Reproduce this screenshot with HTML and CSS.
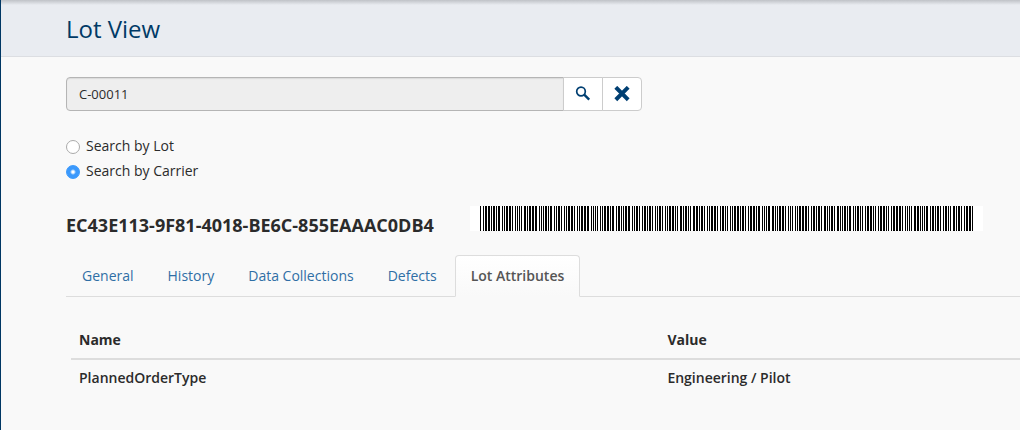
FILE: index.html
```html
<!DOCTYPE html>
<html lang="en">
<head>
<meta charset="utf-8">
<title>Lot View</title>
<link rel="stylesheet" href="styles.css">
</head>
<body>
<header class="page-header"><h1 class="page-title">Lot View</h1></header>
<main class="content">
  <form class="search">
    <div class="search-bar">
      <input class="search-input" type="text" value="C-00011" aria-label="Search value" readonly>
      <button class="search-button" type="button" aria-label="Search">
        <svg width="16" height="16" viewBox="0 0 16 16" aria-hidden="true"><circle cx="6" cy="5.5" r="4.3" fill="none" stroke="currentColor" stroke-width="1.7"/><path d="M9.2 8.7 14.2 13.7" stroke="currentColor" stroke-width="2.4" fill="none"/></svg>
      </button>
      <button class="search-button" type="button" aria-label="Clear">
        <svg width="16" height="16" viewBox="0 0 16 16" aria-hidden="true"><path d="M3.2 2.7 12.8 12.3M12.8 2.7 3.2 12.3" stroke="currentColor" stroke-width="4" stroke-linecap="square" stroke-linejoin="round" fill="none"/></svg>
      </button>
    </div>
    <div class="options">
      <label class="option"><input class="radio" type="radio" name="mode">Search by Lot</label>
      <label class="option"><input class="radio" type="radio" name="mode" checked>Search by Carrier</label>
    </div>
  </form>
  <div class="lot">
    <h2 class="lot-id">EC43E113-9F81-4018-BE6C-855EAAAC0DB4</h2>
    <div class="barcode" data-value="EC43E113-9F81-4018-BE6C-855EAAAC0DB4" role="img" aria-label="Lot barcode"></div>
  </div>
  <nav class="tabs">
    <a class="tab" href="#general">General</a>
    <a class="tab" href="#history">History</a>
    <a class="tab" href="#data">Data Collections</a>
    <a class="tab" href="#defects">Defects</a>
    <a class="tab tab-active" href="#attributes" aria-current="page">Lot Attributes</a>
  </nav>
  <div class="panel">
    <table class="attributes">
      <thead><tr><th class="name-column" scope="col">Name</th><th scope="col">Value</th></tr></thead>
      <tbody><tr><td>PlannedOrderType</td><td>Engineering / Pilot</td></tr></tbody>
    </table>
  </div>
</main>
<script src="barcode.js"></script>
</body>
</html>
```
FILE: styles.css
```css
* { box-sizing: border-box; }
body {
  margin: 0;
  min-height: 100vh;
  border-left: 1px solid #003764;
  background: #f9f9f9;
  color: #2b2b2b;
  font: 14px/20px "Open Sans", "Noto Sans", sans-serif;
}
.page-header {
  padding: 14px 65px 12px;
  border-bottom: 1px solid #dcdee2;
  background: linear-gradient(#bfc2c7, #e9ecf1 5px);
}
.page-title {
  margin: 0;
  color: #003a66;
  font-size: 24px;
  font-weight: 400;
  line-height: 30px;
}
.content { padding: 20px 0 20px 65px; }
.search-bar {
  display: flex;
  max-width: 576px;
  height: 34px;
}
.search-input {
  flex: 1;
  min-width: 0;
  padding: 0 12px;
  border: 1px solid #b5b5b5;
  border-radius: 4px 0 0 4px;
  background: #eee;
  box-shadow: inset 0 1px 1px rgba(0, 0, 0, .08);
  color: #2b2b2b;
  font: inherit;
  font-size: 13px;
}
.search-button {
  display: flex;
  align-items: center;
  justify-content: center;
  width: 40px;
  margin-left: -1px;
  padding: 0;
  border: 1px solid #ccc;
  background: #fff;
  color: #003f72;
}
.search-button:last-child { border-radius: 0 4px 4px 0; }
.options {
  display: grid;
  gap: 5px;
  margin-top: 25px;
}
.option {
  display: flex;
  align-items: center;
  gap: 6px;
  width: fit-content;
}
.radio {
  appearance: none;
  width: 14px;
  height: 14px;
  margin: 2px 0 0;
  border: 1px solid #aaa;
  border-radius: 50%;
  background: #fff;
}
.radio:checked {
  border-color: #3b99fc;
  background: radial-gradient(circle, #fff 1px, #3b99fc 3px);
}
.lot {
  display: flex;
  align-items: flex-start;
  gap: 36px;
  margin-top: 25px;
}
.lot-id {
  margin: 7px 0 0;
  font-size: 18px;
  font-weight: 700;
  line-height: 24px;
  white-space: nowrap;
}
.barcode {
  display: flex;
  flex: none;
  padding: 0 10px;
  background: #fff;
}
.tabs {
  display: flex;
  gap: 2px;
  margin-top: 18px;
  border-bottom: 1px solid #ddd;
}
.tab {
  margin-bottom: -1px;
  padding: 10px 15px;
  border: 1px solid transparent;
  border-radius: 4px 4px 0 0;
  color: #2f6ea5;
  text-decoration: none;
}
.tab-active {
  border-color: #ddd #ddd #f9f9f9;
  background: linear-gradient(#fff, #f9f9f9);
  color: #555;
  font-weight: 600;
}
.panel { padding: 25px 0 0 5px; }
.attributes {
  width: 100%;
  border-collapse: collapse;
  table-layout: fixed;
}
.attributes th,
.attributes td {
  padding: 8px;
  text-align: left;
  font-weight: 600;
}
.attributes th {
  border-bottom: 2px solid #ddd;
  font-weight: 700;
}
.attributes .name-column { width: 62%; }
```
FILE: barcode.js
```js
// Code 39: nine elements per character, bars and spaces alternating, n = narrow, w = wide.
const CODE39 = {
  "0": "nnnwwnwnn", "1": "wnnwnnnnw", "2": "nnwwnnnnw", "3": "wnwwnnnnn",
  "4": "nnnwwnnnw", "5": "wnnwwnnnn", "6": "nnwwwnnnn", "7": "nnnwnnwnw",
  "8": "wnnwnnwnn", "9": "nnwwnnwnn", "A": "wnnnnwnnw", "B": "nnwnnwnnw",
  "C": "wnwnnwnnn", "D": "nnnnwwnnw", "E": "wnnnwwnnn", "F": "nnwnwwnnn",
  "-": "nwnnnnwnw", "*": "nwnnwnwnn"
};

document.querySelectorAll(".barcode").forEach((el) => {
  let x = 0;
  let path = "";
  for (const char of "*" + el.dataset.value + "*") {
    [...CODE39[char]].forEach((size, i) => {
      const width = size === "w" ? 2 : 1;
      if (i % 2 === 0) path += `M${x} 0h${width}v25h-${width}z`;
      x += width;
    });
    x += 1;
  }
  x -= 1;
  el.innerHTML = `<svg width="${x}" height="25" viewBox="0 0 ${x} 25" shape-rendering="crispEdges" aria-hidden="true"><path d="${path}"/></svg>`;
});
```
